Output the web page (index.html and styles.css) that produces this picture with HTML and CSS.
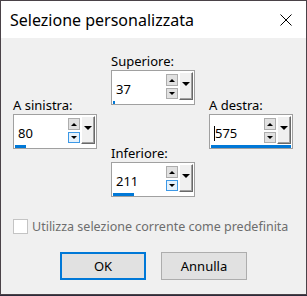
FILE: index.html
```html
<!DOCTYPE html>
<html>
<head>
<meta charset="utf-8">
<link rel="stylesheet" href="styles.css">
</head>
<body>
<div class="window">
  <div class="titlebar">
    <span class="title">Selezione personalizzata</span>
    <svg class="close" width="12" height="12" viewBox="0 0 12 12"><path d="M0.5 0.5L11.5 11.5M11.5 0.5L0.5 11.5" stroke="#000" stroke-width="1" fill="none"/></svg>
  </div>
  <div class="content">
    <div class="controls">
      <div class="col side">
        <div class="group">
          <div class="label">A sinistra:</div>
          <div class="spinbox">
            <div class="row">
              <div class="value">80</div>
              <div class="spins">
                <div class="sbtn"><span class="tri-up"></span></div>
                <div class="sbtn hover"><span class="tri-down"></span></div>
              </div>
              <div class="drop"><span class="tri-drop"></span></div>
            </div>
            <div class="track"><div class="bar" style="width:11px"></div></div>
          </div>
        </div>
      </div>
      <div class="col middle">
        <div class="group">
          <div class="label">Superiore:</div>
          <div class="spinbox">
            <div class="row">
              <div class="value">37</div>
              <div class="spins">
                <div class="sbtn"><span class="tri-up"></span></div>
                <div class="sbtn"><span class="tri-down"></span></div>
              </div>
              <div class="drop"><span class="tri-drop"></span></div>
            </div>
            <div class="track"><div class="bar" style="width:2px"></div></div>
          </div>
        </div>
        <div class="group lower">
          <div class="label">Inferiore:</div>
          <div class="spinbox">
            <div class="row">
              <div class="value">211</div>
              <div class="spins">
                <div class="sbtn"><span class="tri-up"></span></div>
                <div class="sbtn hover"><span class="tri-down"></span></div>
              </div>
              <div class="drop"><span class="tri-drop"></span></div>
            </div>
            <div class="track"><div class="bar" style="width:21px"></div></div>
          </div>
        </div>
      </div>
      <div class="col side">
        <div class="group">
          <div class="label">A destra:</div>
          <div class="spinbox">
            <div class="row">
              <div class="value"><span class="caret"></span>575</div>
              <div class="spins">
                <div class="sbtn"><span class="tri-up"></span></div>
                <div class="sbtn"><span class="tri-down"></span></div>
              </div>
              <div class="drop"><span class="tri-drop"></span></div>
            </div>
            <div class="track"><div class="bar" style="width:80px"></div></div>
          </div>
        </div>
      </div>
    </div>
    <div class="check">
      <span class="checkbox"></span>
      <span class="check-text">Utilizza selezione corrente come predefinita</span>
    </div>
    <div class="buttons">
      <div class="btn default">OK</div>
      <div class="btn">Annulla</div>
    </div>
  </div>
</div>
</body>
</html>
```

FILE: styles.css
```css
* { box-sizing: border-box; }
html, body { margin: 0; padding: 0; }
body {
  width: 307px;
  height: 296px;
  overflow: hidden;
  font-family: "Noto Sans", "Open Sans", sans-serif;
  background: #2b2b3b;
}
.window {
  width: 307px;
  height: 295px;
  border: 1px solid #4a4248;
  background: #f0f0f0;
  display: flex;
  flex-direction: column;
}
.titlebar {
  height: 37px;
  background: #ffffff;
  display: flex;
  align-items: center;
  justify-content: space-between;
  padding: 0 14px 0 9px;
}
.title {
  font-size: 16px;
  color: #000;
  line-height: 20px;
}
.close { display: block; }
.content {
  flex: 1;
  display: flex;
  flex-direction: column;
}
.controls {
  display: flex;
  gap: 14px;
  padding: 15px 0 0 12px;
}
.col { display: flex; flex-direction: column; width: 84px; }
.side { padding-top: 44px; }
.group { display: flex; flex-direction: column; }
.group.lower { margin-top: 40px; }
.label {
  font-size: 13px;
  line-height: 16px;
  height: 16px;
  color: #000;
  margin-bottom: 1px;
}
.spinbox {
  width: 84px;
  height: 35px;
  border: 1px solid #a0a0a0;
  background: #fff;
  display: flex;
  flex-direction: column;
}
.row {
  margin-top: 1px;
  height: 28px;
  display: flex;
  align-items: flex-start;
}
.value {
  flex: 1;
  font-size: 13px;
  line-height: 16px;
  padding: 9px 0 0 4px;
  color: #000;
  display: flex;
  align-items: center;
}
.caret {
  display: inline-block;
  width: 1px;
  height: 15px;
  background: #000;
}
.spins {
  width: 12px;
  padding-top: 2px;
  display: flex;
  flex-direction: column;
  gap: 2px;
  margin-right: 1px;
}
.sbtn {
  width: 12px;
  height: 12px;
  background: #e1e1e1;
  border: 1px solid #adadad;
  display: flex;
  align-items: center;
  justify-content: center;
}
.sbtn + .sbtn { height: 11px; }
.sbtn.hover {
  background: #e5f1fb;
  border-color: #3c98e6;
}
.tri-up {
  width: 0; height: 0;
  border-left: 3px solid transparent;
  border-right: 3px solid transparent;
  border-bottom: 3px solid #000;
}
.tri-down {
  width: 0; height: 0;
  border-left: 3px solid transparent;
  border-right: 3px solid transparent;
  border-top: 3px solid #000;
}
.drop {
  width: 14px;
  height: 28px;
  margin-right: 1px;
  background: #f0f0f0;
  border-top: 1px solid #ffffff;
  border-left: 1px solid #ffffff;
  border-right: 1px solid #696969;
  border-bottom: 1px solid #696969;
  box-shadow: inset -1px -1px 0 #a0a0a0;
  display: flex;
  align-items: center;
  justify-content: center;
  padding-bottom: 4px;
}
.tri-drop {
  width: 0; height: 0;
  border-left: 4px solid transparent;
  border-right: 4px solid transparent;
  border-top: 4px solid #000;
}
.track {
  margin: 1px 0 0 1px;
  height: 3px;
}
.bar {
  height: 3px;
  background: #0078d7;
}
.check {
  display: flex;
  align-items: center;
  gap: 4px;
  margin: 21px 0 0 12px;
  height: 17px;
}
.checkbox {
  width: 15px;
  height: 15px;
  border: 1px solid #c4c4c4;
  background: #fff;
}
.check-text {
  font-size: 12.5px;
  line-height: 17px;
  color: #6d6d6d;
}
.buttons {
  display: flex;
  justify-content: center;
  gap: 15px;
  margin-top: 17px;
}
.btn {
  width: 86px;
  height: 28px;
  background: #e1e1e1;
  border: 1px solid #adadad;
  font-size: 13px;
  display: flex;
  align-items: center;
  justify-content: center;
  color: #000;
}
.btn.default {
  border: 2px solid #0078d7;
}
```
